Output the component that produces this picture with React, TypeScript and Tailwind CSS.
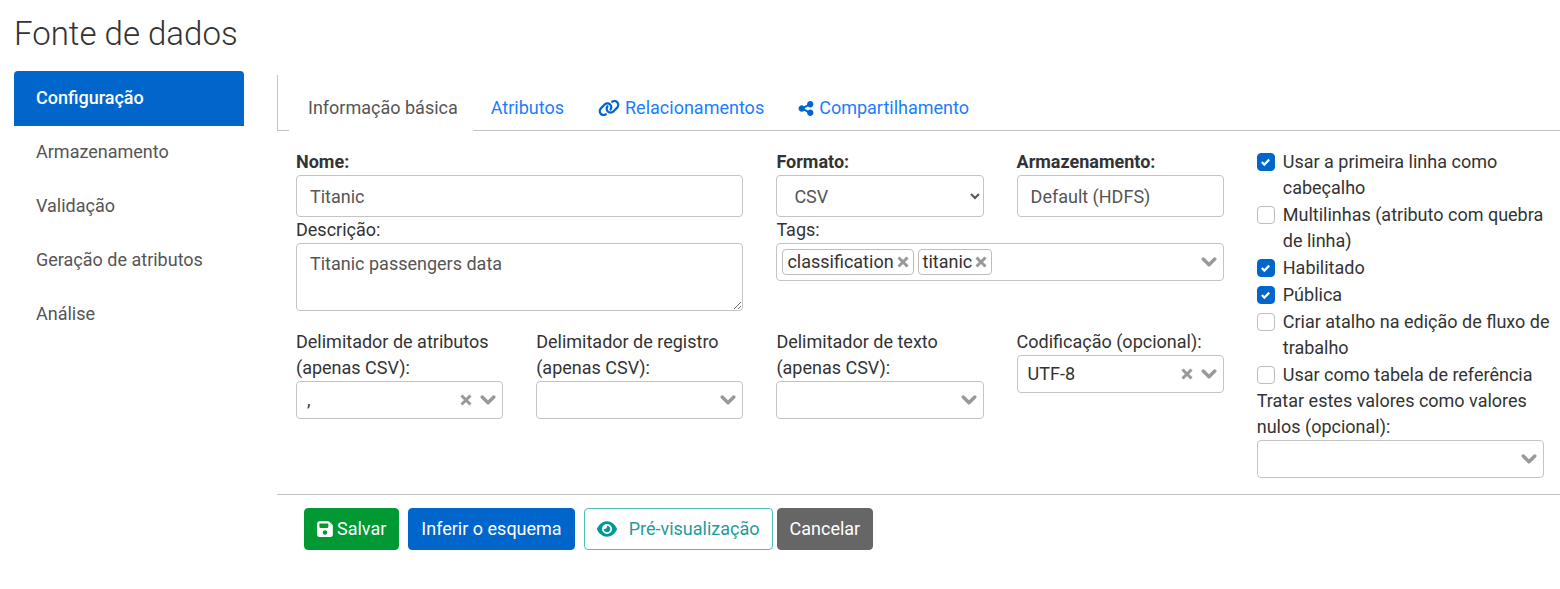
import { useState } from "react";
import type { ReactNode } from "react";
import { FaEye, FaFloppyDisk, FaLink, FaShareNodes } from "react-icons/fa6";

const sections = ["Configuração", "Armazenamento", "Validação", "Geração de atributos", "Análise"];

const tabs: { label: string; icon?: ReactNode }[] = [
  { label: "Informação básica" },
  { label: "Atributos" },
  { label: "Relacionamentos", icon: <FaLink className="h-[18px] w-[22px] text-[#0066cc]" /> },
  { label: "Compartilhamento", icon: <FaShareNodes className="h-[17px] w-4 text-[#0066cc]" /> },
];

const initialOptions = [
  { label: "Usar a primeira linha como cabeçalho", checked: true },
  { label: "Multilinhas (atributo com quebra de linha)", checked: false },
  { label: "Habilitado", checked: true },
  { label: "Pública", checked: true },
  { label: "Criar atalho na edição de fluxo de trabalho", checked: false },
  { label: "Usar como tabela de referência", checked: false },
];

function Chevron() {
  return (
    <svg viewBox="0 0 16 12" className="pointer-events-none h-3 w-4 shrink-0" aria-hidden="true">
      <path d="M2.2 3l5.8 5.8L13.8 3" fill="none" stroke="#999999" strokeWidth="3.4" strokeLinecap="round" strokeLinejoin="round" />
    </svg>
  );
}

function Cross() {
  return (
    <svg viewBox="0 0 12 12" className="size-3" aria-hidden="true">
      <path d="M1.5 1.5l9 9M10.5 1.5l-9 9" fill="none" stroke="#999999" strokeWidth="3" />
    </svg>
  );
}

function Combo({ id, label, options }: { id: string; label: string; options: string[] }) {
  const [value, setValue] = useState(options[0] ?? "");
  return (
    <div className="flex flex-col">
      <label htmlFor={id}>{label}</label>
      <div className="flex h-[38px] items-center rounded border border-[#c4c4c4] bg-white pr-[6px]">
        <select
          id={id}
          value={value}
          onChange={(e) => setValue(e.target.value)}
          className="h-full min-w-0 flex-1 appearance-none bg-transparent px-[10px] text-[#333333] outline-none"
        >
          <option value=""></option>
          {options.map((o) => (
            <option key={o} value={o}>{o}</option>
          ))}
        </select>
        {value !== "" && (
          <button type="button" aria-label="Limpar" onClick={() => setValue("")} className="mr-2">
            <Cross />
          </button>
        )}
        <Chevron />
      </div>
    </div>
  );
}

function Check({ label, initial }: { label: string; initial: boolean }) {
  const [checked, setChecked] = useState(initial);
  return (
    <label className="flex items-start gap-2">
      <span className="mt-1 grid shrink-0">
        <input
          type="checkbox"
          checked={checked}
          onChange={(e) => setChecked(e.target.checked)}
          className="peer col-start-1 row-start-1 size-[18px] appearance-none rounded border border-[#bdbdbd] bg-white checked:border-[#0066cc] checked:bg-[#0066cc]"
        />
        <svg
          viewBox="0 0 8 8"
          className="pointer-events-none invisible col-start-1 row-start-1 size-[9px] place-self-center peer-checked:visible"
          aria-hidden="true"
        >
          <path fill="#ffffff" d="M6.564.75l-3.59 3.612-1.538-1.55L0 4.26 2.974 7.25 8 2.193z" />
        </svg>
      </span>
      <span>{label}</span>
    </label>
  );
}

export default function App() {
  const [tags, setTags] = useState(["classification", "titanic"]);
  const field =
    "w-full rounded border border-[#c4c4c4] bg-white px-[13px] text-[#555555] outline-none";
  const button = "flex h-[42px] items-center rounded border px-3";

  return (
    <main className="bg-white pt-[14px] pl-[14px] font-['Roboto','Liberation_Sans',sans-serif] text-[18px] leading-[26px] text-[#333333]">
      <h1 className="text-[33px] leading-[40px] font-light">Fonte de dados</h1>
      <div className="mt-[17px] flex items-start gap-[33px]">
        <nav className="flex w-[230px] shrink-0 flex-col">
          {sections.map((s, i) => (
            <a
              key={s}
              href="#"
              className={
                i === 0
                  ? "rounded-t bg-[#0066cc] px-[22px] pt-[14px] pb-[15px] font-medium text-white"
                  : "px-[22px] pt-[13px] pb-[15px] text-[#555555]"
              }
            >
              {s}
            </a>
          ))}
        </nav>

        <form className="min-w-0 flex-1" onSubmit={(e) => e.preventDefault()}>
          <div className="mt-1 flex border-l border-[#c4c4c4]">
            <div className="w-[11px] border-b border-[#c4c4c4]" />
            <div role="tablist" className="flex flex-1">
              {tabs.map((t, i) => (
                <button
                  key={t.label}
                  type="button"
                  role="tab"
                  aria-selected={i === 0}
                  className={
                    i === 0
                      ? "border-b border-transparent pt-5 pr-[15px] pb-[9px] pl-[19px] text-[#555555]"
                      : "flex items-center gap-[5px] border-b border-[#c4c4c4] pt-5 pr-4 pb-[9px] pl-[18px] text-[#1a7dff]"
                  }
                >
                  {t.icon}
                  {t.label}
                </button>
              ))}
              <div className="flex-1 border-b border-[#c4c4c4]" />
            </div>
          </div>

          <div className="grid grid-cols-4 gap-[33px] border-b border-[#c4c4c4] pt-[18px] pr-4 pb-4 pl-[19px]">
            <div className="col-span-3">
              <div className="grid grid-cols-4 gap-x-[33px]">
                <div className="col-span-2 flex flex-col">
                  <label htmlFor="name" className="font-bold">Nome:</label>
                  <input id="name" defaultValue="Titanic" className={`${field} h-[42px]`} />
                </div>
                <div className="flex flex-col">
                  <label htmlFor="format" className="font-bold">Formato:</label>
                  <select id="format" className={`${field} h-[42px]`}>
                    <option>CSV</option>
                    <option>JSON</option>
                    <option>Parquet</option>
                  </select>
                </div>
                <div className="flex flex-col">
                  <label htmlFor="storage" className="font-bold">Armazenamento:</label>
                  <input id="storage" readOnly value="Default (HDFS)" className={`${field} h-[42px]`} />
                </div>
                <div className="col-span-2 flex flex-col">
                  <label htmlFor="description">Descrição:</label>
                  <textarea id="description" defaultValue="Titanic passengers data" className={`${field} h-[68px] py-[7px]`} />
                </div>
                <div className="col-span-2 flex flex-col">
                  <label htmlFor="tags">Tags:</label>
                  <div className="flex h-[38px] items-center gap-1 rounded border border-[#c4c4c4] bg-white pr-[6px] pl-[5px]">
                    {tags.map((t) => (
                      <span key={t} className="flex h-[26px] items-center gap-[3px] rounded border border-[#bdbdbd] px-1">
                        {t}
                        <button type="button" aria-label={`Remover ${t}`} onClick={() => setTags(tags.filter((x) => x !== t))}>
                          <Cross />
                        </button>
                      </span>
                    ))}
                    <input id="tags" className="min-w-0 flex-1 bg-transparent outline-none" />
                    <Chevron />
                  </div>
                </div>
              </div>
              <div className="mt-[18px] grid grid-cols-4 gap-x-[33px]">
                <Combo id="attribute-delimiter" label="Delimitador de atributos (apenas CSV):" options={[","]} />
                <Combo id="record-delimiter" label="Delimitador de registro (apenas CSV):" options={[]} />
                <Combo id="text-delimiter" label="Delimitador de texto (apenas CSV):" options={[]} />
                <Combo id="encoding" label="Codificação (opcional):" options={["UTF-8"]} />
              </div>
            </div>

            <div>
              <div className="-mr-3 flex flex-col gap-px">
                {initialOptions.map((o) => (
                  <Check key={o.label} label={o.label} initial={o.checked} />
                ))}
              </div>
              <Combo id="null-values" label="Tratar estes valores como valores nulos (opcional):" options={[]} />
            </div>
          </div>

          <div className="flex gap-[9px] pt-[13px] pl-[27px]">
            <button type="submit" className={`${button} gap-1 border-[#009933] bg-[#009933] text-white`}>
              <FaFloppyDisk className="h-[18px] w-4" />
              Salvar
            </button>
            <button type="button" className={`${button} border-[#0066cc] bg-[#0066cc] text-white`}>
              Inferir o esquema
            </button>
            <div className="flex gap-1">
              <button type="button" className={`${button} gap-3 border-[#4dbdbd] bg-white text-[#1f9c9c]`}>
                <FaEye className="h-[18px] w-5 text-[#009999]" />
                Pré-visualização
              </button>
              <button type="button" className={`${button} border-[#666666] bg-[#666666] text-white`}>
                Cancelar
              </button>
            </div>
          </div>
        </form>
      </div>
    </main>
  );
}
